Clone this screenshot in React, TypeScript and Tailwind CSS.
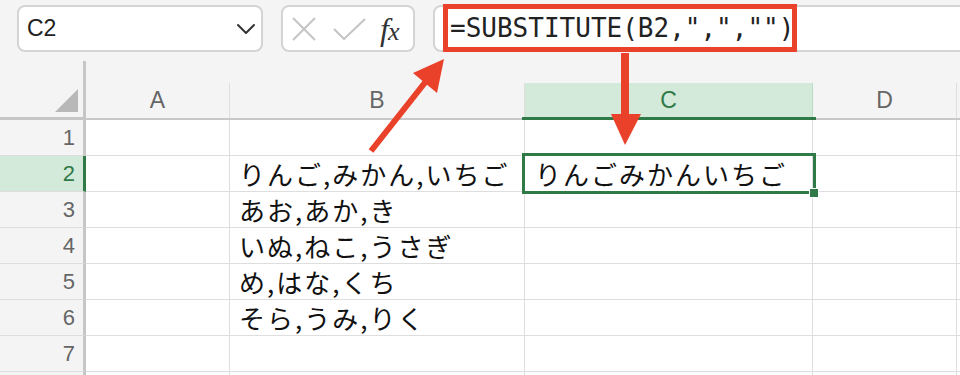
import React from "react";

const rows: { n: number; b: string; c: string }[] = [
  { n: 1, b: "", c: "" },
  { n: 2, b: "りんご,みかん,いちご", c: "りんごみかんいちご" },
  { n: 3, b: "あお,あか,き", c: "" },
  { n: 4, b: "いぬ,ねこ,うさぎ", c: "" },
  { n: 5, b: "め,はな,くち", c: "" },
  { n: 6, b: "そら,うみ,りく", c: "" },
  { n: 7, b: "", c: "" },
  { n: 8, b: "", c: "" },
];

const jp = "font-['Noto_Sans_CJK_JP','Noto_Sans',sans-serif]";

function ColHead({ label, w, active }: { label: string; w: string; active?: boolean }) {
  return (
    <div className={`flex h-full shrink-0 flex-col ${w} ${active ? "border-b-[3px] border-[#2f7a47]" : "border-b-2 border-[#c8c8c8]"}`}>
      <div className="h-[22px]" />
      <div
        className={`flex flex-1 items-center justify-center border-r text-[23px] ${
          active ? "border-[#b9dcc5] bg-[#d3e9da] text-[#2f7a47]" : "border-[#dedede] text-[#666]"
        }`}
      >
        {label}
      </div>
    </div>
  );
}

export default function App() {
  return (
    <div className="relative h-[375px] w-[960px] overflow-hidden bg-white font-['Liberation_Sans',Arial,sans-serif]">
      {/* formula bar */}
      <div className="flex h-[61px] items-start gap-[18px] bg-[#f4f4f4] pl-[17px] pt-[5px]">
        <div className="flex h-[47px] w-[246px] shrink-0 items-center justify-between rounded-[8px] border-2 border-[#d4d4d4] bg-white pl-[8px] pr-[5px]">
          <span className="text-[23px] text-[#222]">C2</span>
          <svg width="20" height="12" viewBox="0 0 20 12" fill="none">
            <path d="M2 2l8 8 8-8" stroke="#333" strokeWidth="2" strokeLinecap="round" strokeLinejoin="round" />
          </svg>
        </div>
        <div className="flex h-[47px] w-[134px] shrink-0 items-center rounded-[8px] border-2 border-[#d4d4d4] bg-white pl-[8px]">
          <svg width="26" height="26" viewBox="0 0 26 26" fill="none">
            <path d="M2 2l22 22M24 2L2 24" stroke="#c4c4c4" strokeWidth="2" />
          </svg>
          <svg width="33" height="22" viewBox="0 0 33 22" fill="none" className="ml-[16px]">
            <path d="M1 11l10 10L32 1" stroke="#c4c4c4" strokeWidth="2" />
          </svg>
          <span className="ml-[14px] flex items-baseline text-[#333]">
            <span className="font-['Liberation_Serif',serif] text-[32px] italic leading-none">f</span>
            <span className="-ml-[1px] font-['Liberation_Serif',serif] text-[26px] italic leading-none">x</span>
          </span>
        </div>
        <div className="-mr-[20px] flex h-[47px] flex-1 items-start rounded-[8px] border-2 border-[#d4d4d4] bg-white pl-[8px]">
          <span className="-mt-[3px] flex h-[48px] w-[354px] items-center whitespace-nowrap border-[5px] border-[#ea412a] pl-[2px] font-['DejaVu_Sans_Mono',monospace] text-[26px] text-[#222]">
            =SUBSTITUTE(B2,",","")
          </span>
        </div>
      </div>

      {/* column headers */}
      <div className="flex h-[59px] bg-[#f4f4f4]">
        <div className="flex h-full w-[86px] shrink-0 items-end justify-end border-b-[3px] border-r-[3px] border-[#c6c6c6] pb-[5px] pr-[5px]">
          <svg width="23" height="23" viewBox="0 0 23 23">
            <path d="M23 0V23H0Z" fill="#b8b8b8" />
          </svg>
        </div>
        <ColHead label="A" w="w-[144px]" />
        <ColHead label="B" w="w-[295px]" />
        <ColHead label="C" w="w-[288px]" active />
        <ColHead label="D" w="w-[144px]" />
        <ColHead label="" w="w-[10px]" />
      </div>

      {/* grid */}
      {rows.map((r) => {
        const sel = r.n === 2;
        return (
          <div key={r.n} className="flex h-[36px]">
            <div
              className={`flex w-[86px] shrink-0 items-center justify-end border-b border-r-[3px] border-b-[#dedede] pr-[8px] text-[22px] ${
                sel ? "border-r-[#2f7a47] bg-[#d3e9da] text-[#2f7a47]" : "border-r-[#c6c6c6] bg-[#f4f4f4] text-[#666]"
              }`}
            >
              {r.n < 8 ? r.n : ""}
            </div>
            <div className="w-[144px] shrink-0 border-b border-r border-[#dedede]" />
            <div className={`flex w-[295px] shrink-0 items-center whitespace-nowrap border-b border-r border-[#dedede] pl-[9px] text-[26px] leading-[28px] tracking-[2px] text-[#111] ${jp}`}>
              {r.b}
            </div>
            <div className={`flex w-[288px] shrink-0 items-center whitespace-nowrap border-b border-r border-[#dedede] pl-[10px] text-[26px] leading-[28px] tracking-[2px] text-[#111] ${jp}`}>
              {r.c}
            </div>
            <div className="w-[144px] shrink-0 border-b border-r border-[#dedede]" />
            <div className="w-[10px] shrink-0 border-b border-[#dedede]" />
          </div>
        );
      })}

      {/* selection on C2 */}
      <div className="pointer-events-none absolute left-[522px] top-[117px] h-[3px] w-[294px] bg-[#2f7a47]" />
      <div className="pointer-events-none absolute left-[522px] top-[153px] h-[41px] w-[294px] border-[3px] border-[#2f7a47]" />
      <div className="pointer-events-none absolute left-[809px] top-[188px] h-[10px] w-[10px] border border-white bg-[#2f7a47]" />

      {/* callout arrows */}
      <svg className="pointer-events-none absolute inset-0" width="960" height="375" viewBox="0 0 960 375">
        <line x1="371" y1="151" x2="427" y2="80" stroke="#ea412a" strokeWidth="6" />
        <path d="M444 59L413 73L437 93Z" fill="#ea412a" />
        <rect x="621" y="53" width="8" height="63" fill="#ea412a" />
        <path d="M611 114H641L625 145Z" fill="#ea412a" />
      </svg>
    </div>
  );
}
